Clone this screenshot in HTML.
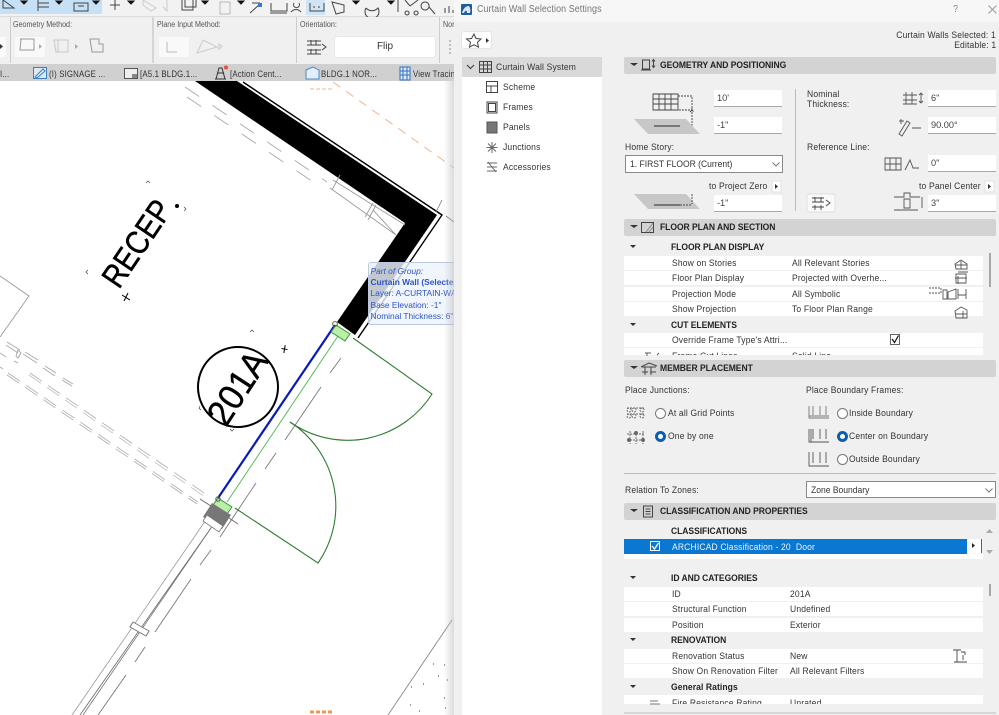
<!DOCTYPE html>
<html><head><meta charset="utf-8"><style>
html,body{margin:0;padding:0;width:999px;height:715px;overflow:hidden;background:#f0f0f0}
body{position:relative;font-family:"Liberation Sans",sans-serif;font-size:9.6px;color:#333}
.a{position:absolute}
.t{position:absolute;white-space:nowrap;line-height:12px;height:12px;letter-spacing:.18px;margin-top:2px;transform:scaleX(.89);transform-origin:0 50%}
.b{font-weight:bold;color:#222;letter-spacing:-.05px;margin-top:1px}
.tr{transform-origin:100% 50%;margin-top:1px}
.u{font-size:8px;color:#555;letter-spacing:0;margin-top:1px}
.tb{font-size:8.8px;color:#333;margin-top:1px}
.h{position:absolute;left:624px;width:372px;height:17px;background:#d3d3d3;border-radius:2px}
.in{position:absolute;background:#fff;border-bottom:1px solid #a8a8a8;box-sizing:border-box;height:17px;width:68px;line-height:16px;padding-left:3px;font-size:9.2px;color:#444}
.r{position:absolute;left:624px;width:359px;height:14px;background:#fff}
.s{position:absolute;left:624px;width:359px;height:15px;background:#f0f0f0}
svg{position:absolute;overflow:visible}
.rad{position:absolute;width:9px;height:9px;border:1px solid #777;border-radius:50%;background:#fff}
.on{width:5px;height:5px;border:3px solid #0a5fb0}
.bt{font-family:"Liberation Sans",sans-serif}
.sp{display:inline-block;transform:scaleX(.89);transform-origin:0 50%;white-space:nowrap}
</style></head><body>

<!-- CAD drawing -->
<div class="a" style="left:0;top:81px;width:454px;height:634px;background:#fff"></div>
<svg style="left:0;top:0" width="454" height="715" viewBox="0 0 454 715">
<g fill="none">
<polygon points="195,81 237,81 437,215 355,335 337,322 405,223" fill="#000"/>
<polyline points="243,82 442,215 358,338" stroke="#000" stroke-width="1.4"/>
<!-- orange dashed -->
<path d="M333,82L454,168" stroke="#eeb58f" stroke-width="1" stroke-dasharray="9 7"/>
<path d="M310,89h22" stroke="#f0b592" stroke-width="1" stroke-dasharray="4 2"/>
<!-- upper grey dashes -->
<path d="M185,87L327,182M187,97L322,188" stroke="#aaa" stroke-width=".9" stroke-dasharray="17 16"/>
<path d="M333,180L405,225M330,188L396,235M340,175L332,190M373,203L365,217M376,205L368,220M373,210L396,235" stroke="#999" stroke-width=".9"/>
<path d="M442,200L436,212M446,216L454,222" stroke="#777" stroke-width=".8"/>
<!-- left box -->
<path d="M0,276L29,296L0,337" stroke="#999" stroke-width=".9"/>
<!-- dash rows -->
<path d="M7,342L20,350M6,345L18,353M23,354L37,363M25,352L38,360M43,368L55,376M45,366L56,373M62,380L72,386M63,378L73,384M0,353L6,357M0,367L3,369" stroke="#aaa" stroke-width=".9"/>
<path d="M30,373L207,495" stroke="#aaa" stroke-width=".8" stroke-dasharray="14.500 7.400"/>
<path d="M29,375L205,497" stroke="#bbb" stroke-width=".8" stroke-dasharray="14.500 7.400"/>
<path d="M8,373L198,502" stroke="#aaa" stroke-width=".8" stroke-dasharray="14.500 7.400"/>
<path d="M7,375L197,504" stroke="#aaa" stroke-width=".8" stroke-dasharray="14.500 7.400"/>
<path d="M18,358l3,-5l-3,-3l-2,6zM14,361l4,2" stroke="#999" stroke-width=".8"/>
<!-- bottom walls -->
<path d="M208,517L72,715" stroke="#999" stroke-width=".8"/>
<path d="M213,525L80,715" stroke="#666" stroke-width=".8"/>
<path d="M211,528L83,715" stroke="#777" stroke-width=".8"/>
<path d="M133,622l16,9l-3,5l-16,-9z" fill="#fff" stroke="#777"/>
<path d="M341,358L330,373M321,387L285,440M276,453L265,469M256,483L220,537M211,550L200,565M191,579L155,632M145,647L135,662M126,675L98,715" stroke="#777" stroke-width=".9"/>
<path d="M200,499L214,508M226,516L238,524" stroke="#666" stroke-width=".9"/>
<!-- Door -->
<path d="M353,338L432,394A100,100 0 0 1 290,422" stroke="#2f7d33" stroke-width="1.1"/>
<path d="M235,508L318,563A100,100 0 0 0 290,422" stroke="#2f7d33" stroke-width="1.1"/>
<path d="M340,333L227,502" stroke="#5cb85c" stroke-width="1"/>
<path d="M335,325L218,498" stroke="#0a1ab8" stroke-width="2.2"/>
<path d="M336,325l14,9l-5,7l-14,-9zM218,498l14,9l-5,7l-14,-9z" fill="#b7f0a6" stroke="#2f8f33" stroke-width=".9"/>
<path d="M212,503l19,12l-9,14l-19,-12z" fill="#777"/>
<path d="M207,515l16,11l-4,6l-16,-11z" fill="#fff" stroke="#777" stroke-width=".8"/>
<circle cx="335" cy="324" r="2.4" stroke="#6b6b2a"/><circle cx="218" cy="499" r="2.2" stroke="#555"/>
<!-- marker -->
<circle cx="238" cy="387" r="40" stroke="#000" stroke-width="2"/>
<path d="M281,349h6M284,353l0,-8" stroke="#000" transform="rotate(10 284 352)"/>
<path d="M122,269l8,5M128,267l-4,8" stroke="#000" transform="translate(0,26)"/>
<path d="M250,332l2,-2l2,2M146,183l2,-2l2,2M88,270l-2,2l2,2M184,207l2,2l-2,2M200,406l-1,2l2,2M230,429l2,2l2,-2" stroke="#444" stroke-width=".7"/>
<circle cx="177" cy="206" r="2" fill="#000"/>
<!-- bottom right -->
<path d="M452,620L388,715" stroke="#888" stroke-width=".9"/>
<path d="M310,712h22" stroke="#f0955c" stroke-width="3" stroke-dasharray="4 2"/>
<path d="M433,664h1M444,665h1M438,676h1M447,680h1M411,687h1M423,684h1M410,705h1M419,711h1M444,698h1M445,708h1" stroke="#777" stroke-width="1.5"/>
</g>
<text class="bt" transform="translate(119,290) rotate(-56)" font-size="33" fill="#000" stroke="#000" stroke-width=".5" textLength="97" lengthAdjust="spacingAndGlyphs">RECEP</text>
<text class="bt" transform="translate(226,428) rotate(-57)" font-size="36" fill="#000" stroke="#000" stroke-width=".4" textLength="80" lengthAdjust="spacingAndGlyphs">201A</text>
</svg>

<!-- tooltip -->
<div class="a" style="left:368px;top:262px;width:86px;height:63px;background:rgba(238,243,252,.82);border:1px solid #b9c9e3;border-right:0;box-sizing:border-box;border-radius:3px 0 0 3px;overflow:hidden;color:#2b55c9;font-size:8.4px;line-height:11.2px;padding:3px 0 0 1.5px;white-space:nowrap">
<i>Part of Group:</i><br><b>Curtain Wall (Selected)</b><br>Layer: A-CURTAIN-WALL<br>Base Elevation: -1"<br>Nominal Thickness: 6"
</div>
<div class="a" style="left:444px;top:81px;width:10px;height:634px;background:linear-gradient(90deg,rgba(200,200,200,0),rgba(190,190,190,.55))"></div>

<!-- Top toolbar -->
<div class="a" style="left:0;top:0;width:454px;height:16px;background:#f2f2f2"></div>
<div class="a" style="left:0;top:0;width:102px;height:14px;background:#c6e0f5"></div>
<div class="a" style="left:306px;top:0;width:19px;height:15px;background:#cfe4f5"></div>
<div class="a" style="left:0;top:16px;width:454px;height:1px;background:#dcdcdc"></div>
<svg style="left:0;top:0" width="454" height="17" viewBox="0 0 454 17" fill="none" stroke="#444" stroke-width="1">
<path d="M3,0L14,8H3zM38,0v11M38,3h11M38,7h11" />
<path d="M21,1l3,3l3,-3zM56,1l3,3l3,-3zM93,1l3,3l3,-3zM128,1l3,3l3,-3zM202,1l3,3l3,-3zM238,1l3,3l3,-3zM353,1l3,3l3,-3zM388,1l3,3l3,-3z" fill="#111" stroke="#111"/>
<path d="M74,3h14v8h-14zM78,6h6"/>
<path d="M110,5h10M115,0v10"/>
<path d="M143,0l13,8l-5,3l-8,-6zM167,0v11l-4,-4" stroke="#ccc"/>
<path d="M182,0v10h11V0M185,0v7h11V0"/>
<path d="M220,2h10v12h-10z" stroke="#bbb"/>
<path d="M250,13l10,-9M252,3h8M270,13h17M271,3v8h16v-8"/>
<path d="M294,3a3,3 0 1 0 5,0M291,12q5,-5 10,0"/>
<path d="M310,3v8h14v-8M313,7h2M318,7h2"/>
<path d="M332,2l12,3v7l-8,2zM366,8a7,7 0 1 0 12,0a8,8 0 0 1 -12,0"/>
<path d="M405,0l5,6M418,0l-8,6M407,11a2,2 0 1 0 .1,0M416,11a2,2 0 1 0 .1,0M425,2a4,4 0 1 0 .1,0M429,7l6,7M398,0v12" stroke-width="1"/>
<path d="M445,8v5M449,6v7M453,10v3"/>
<rect x="258" y="3" width="4" height="4" fill="#3377dd" stroke="none"/>
</svg>

<!-- options -->
<div class="a" style="left:0;top:17px;width:454px;height:47px;background:#f0f0f0"></div>
<div class="a" style="left:10px;top:17px;width:1px;height:46px;background:#ccc"></div>
<div class="a" style="left:152px;top:17px;width:2px;height:46px;background:#d5d5d5"></div>
<div class="a" style="left:296px;top:17px;width:1px;height:46px;background:#ccc"></div>
<div class="a" style="left:439px;top:17px;width:1px;height:46px;background:#ccc"></div>
<div class="a" style="left:0;top:37px;width:6px;height:20px;background:#fafafa"></div>
<div class="a" style="left:15px;top:37px;width:30px;height:20px;background:#f9f9f9"></div>
<div class="a" style="left:159px;top:37px;width:30px;height:20px;background:#f9f9f9"></div>
<div class="t u" style="left:13px;top:18px">Geometry Method:</div>
<div class="t u" style="left:157px;top:18px">Plane Input Method:</div>
<div class="t u" style="left:300px;top:18px">Orientation:</div>
<div class="t u" style="left:443px;top:18px">Nor</div>
<svg style="left:0;top:17px" width="454" height="47" viewBox="0 17 454 47" fill="none" stroke="#aaa" stroke-width="1">
<path d="M20,39h14v11h-14l1,-11zM90,39h9v5h4v8h-11z" stroke="#999"/>
<path d="M39,44l3,2.5l-3,2.5z" fill="#aaa" stroke="none"/><path d="M75,44l3,2.5l-3,2.5z" fill="#aaa" stroke="none"/><path d="M0,44l3,2.5l-3,2.5z" fill="#333" stroke="none"/>
<path d="M54,40h14v12h-12zM58,40v12" stroke="#c8c8c8"/>
<path d="M167,42v10h10" stroke="#bbb"/>
<path d="M197,53l6,-13l14,7zM219,44l3,2.5l-3,2.5z" stroke="#ccc"/>
<path d="M307,41h14M307,45h14M307,50h14M307,54h14M311,40v5M316,40v5M311,49v5M316,49v5M322,44l4,3l-4,3" stroke="#444"/>
<path d="M450,40v15" stroke="#888" stroke-dasharray="2 2"/>
</svg>
<div class="a" style="left:335px;top:37px;width:100px;height:20px;background:#fff;border-radius:2px;box-shadow:0 0 1px #bbb;text-align:center;line-height:20px;font-size:10px;color:#333">Flip</div>

<!-- tabs -->
<div class="a" style="left:0;top:64px;width:454px;height:17px;background:#d0d0d0"></div>
<div class="t tb" style="left:0;top:67px">I...</div>
<div class="t tb" style="left:49px;top:67px">(I) SIGNAGE ...</div>
<div class="t tb" style="left:140px;top:67px">[A5.1 BLDG.1...</div>
<div class="t tb" style="left:230px;top:67px">[Action Cent...</div>
<div class="t tb" style="left:321px;top:67px">BLDG.1 NOR...</div>
<div class="t tb" style="left:413px;top:67px;width:46px;overflow:hidden">View Tracing</div>
<svg style="left:0;top:64px" width="454" height="17" viewBox="0 64 454 17" fill="none">
<rect x="33.500" y="67.500" width="13" height="11" fill="#dceaf7" stroke="#3e7fc0"/><path d="M35,77l8,-8l2,2l-8,7z" stroke="#3e7fc0"/>
<rect x="124.500" y="68.500" width="13" height="10" stroke="#555" fill="#eee"/><rect x="132" y="74" width="5" height="4" fill="#888"/>
<path d="M216,79l3,-11h3l3,11zM215,79h11M217,73h7" stroke="#333"/><circle cx="226" cy="67.500" r="2" fill="#e0533a"/>
<path d="M306,70l7,-3l6,3v9h-13z" fill="#e4eef8" stroke="#4a8ac4"/>
<rect x="400" y="67" width="10" height="13" fill="#dce9f7" stroke="#2f6fc0"/><path d="M400,71h10M400,75h10M403,67v13M407,67v13" stroke="#2f6fc0"/>
</svg>

<!-- DIALOG -->
<div class="a" style="left:454px;top:0;width:545px;height:715px;background:#f0f0f0"></div>
<div class="a" style="left:454px;top:0;width:545px;height:22px;background:#f7f7f7"></div>
<div class="a" style="left:461px;top:4px;width:11px;height:11px;background:#1f5d9c;border-radius:1px"></div>
<svg style="left:461px;top:4px" width="11" height="11" viewBox="0 0 11 11" fill="none"><path d="M1,9Q3,2 8,2Q10,5 9,9H6Q6,6 4,7L3,9z" fill="#dbe9f6"/></svg>
<div class="t" style="left:477px;top:2px;font-size:10px;color:#777;letter-spacing:.1px">Curtain Wall Selection Settings</div>
<div class="t" style="left:953px;top:2px;font-size:10px;color:#888">?</div>
<svg style="left:988px;top:5px" width="9" height="9" fill="none" stroke="#999"><path d="M.5,.5l8,8M8.500,.5l-8,8"/></svg>

<div class="a" style="left:462px;top:32px;width:29px;height:16px;background:#fff;border-radius:2px;box-shadow:0 0 1px #aaa"></div>
<svg style="left:466px;top:33px" width="24" height="14" fill="none" stroke="#444"><path d="M8,1l2,4.500l5,.5l-3.500,3.200l1,5l-4.500,-2.500l-4.500,2.500l1,-5L0.500,6l5,-.5z"/><path d="M20,5l3,2.500l-3,2.500z" fill="#333" stroke="none"/></svg>
<div class="t tr" style="right:3px;top:29px;color:#333">Curtain Walls Selected: 1</div>
<div class="t tr" style="right:3px;top:39px;color:#333">Editable: 1</div>

<!-- nav -->
<div class="a" style="left:462px;top:57px;width:140px;height:658px;background:#fff"></div>
<div class="a" style="left:462px;top:57px;width:140px;height:20px;background:#d9d9d9"></div>
<div class="t" style="left:496px;top:60px;color:#333">Curtain Wall System</div>
<div class="t" style="left:503px;top:80px">Scheme</div>
<div class="t" style="left:503px;top:100px">Frames</div>
<div class="t" style="left:503px;top:120px">Panels</div>
<div class="t" style="left:503px;top:140px">Junctions</div>
<div class="t" style="left:503px;top:160px">Accessories</div>
<svg style="left:462px;top:57px" width="40" height="125" viewBox="462 57 40 125" fill="none" stroke="#444">
<path d="M467,65l3.500,3.500l3.500,-3.500" stroke-width="1.2"/>
<path d="M479.500,61.500h12v11h-12zM483.500,61.500v11M487.500,61.500v11M479.500,65h12M479.500,69h12"/>
<path d="M486.500,81.500h11v11h-11zM486.500,86h11M491,86v6.500"/>
<path d="M487,102h10v11h-10z M488.500,103.500h7v8h-7z"/>
<rect x="487" y="122" width="10" height="11" fill="#777" stroke="#555"/>
<path d="M492,142v11M486.500,147.500h11M488,143.500l8,8M496,143.500l-8,8" stroke="#666"/>
<path d="M487,163h10M487,167h10M487,171h10M488,162l8,10" stroke="#666"/>
</svg>

<!-- Geometry -->
<div class="h" style="top:57px"></div>
<svg style="left:624px;top:57px" width="36" height="17" fill="none" stroke="#444"><path d="M6,6l4,3l4,-3z" fill="#333" stroke="none"/><path d="M18.500,3h7v9h-7zM17,13h10M29.500,3v7M28,4.500l1.500,-2l1.500,2M28,8.500l1.500,2l1.500,-2"/></svg>
<div class="t b" style="left:660px;top:59px">GEOMETRY AND POSITIONING</div>

<div class="in" style="left:714px;top:90px">10'</div>
<div class="in" style="left:714px;top:117px">-1"</div>
<div class="in" style="left:714px;top:195px">-1"</div>
<div class="in" style="left:928px;top:90px">6"</div>
<div class="in" style="left:928px;top:117px">90.00°</div>
<div class="in" style="left:928px;top:155px">0"</div>
<div class="in" style="left:928px;top:195px">3"</div>
<div class="a" style="left:625px;top:155px;width:158px;height:18px;background:#fff;border:1px solid #888;box-sizing:border-box;line-height:18px;padding-left:4px;color:#333"><span class="sp">1. FIRST FLOOR (Current)</span></div>
<svg style="left:772px;top:162px" width="8" height="5" fill="none" stroke="#777"><path d="M.5,.5L4,4L7.500,.5"/></svg>
<div class="t" style="left:625px;top:140px">Home Story:</div>
<div class="t" style="left:709px;top:179px">to Project Zero</div>
<div class="t" style="left:807px;top:87px">Nominal</div>
<div class="t" style="left:807px;top:97px">Thickness:</div>
<div class="t" style="left:807px;top:140px">Reference Line:</div>
<div class="t" style="left:919px;top:179px">to Panel Center</div>
<div class="a" style="left:795px;top:89px;width:1px;height:122px;background:#bbb"></div>
<svg style="left:624px;top:85px" width="375" height="130" viewBox="624 85 375 130" fill="none" stroke="#444" stroke-width=".9">
<path d="M653,94h25v16h-25zM659,94v16M665,94v16M671,94v16M653,99h25M653,104h25"/>
<path d="M678,96h14v35M679,110h13M692,110v-3M690,112l2,-2l2,2M690,129l2,2l2,-2" stroke-dasharray="2 1"/>
<path d="M634,119h52l14,15h-52z" fill="#c7c7c7" stroke="none"/><rect x="654" y="125" width="26" height="2" fill="#777" stroke="none"/>
<path d="M634,194h52l14,15h-52z" fill="#c7c7c7" stroke="none"/><rect x="654" y="204" width="26" height="2" fill="#777" stroke="none"/>
<path d="M692,194v10M680,205h12" stroke-dasharray="2 1"/>
<path d="M903,95h14M903,100h14M903,104h14M906,92v12M912,92v12M921,93v10M919,95l2,-2l2,2M919,101l2,2l2,-2" stroke="#555"/>
<path d="M899,134l8,-13l3,2l-8,13zM912,128h9M899,121h5M901,119v5" stroke="#555"/>
<path d="M885,158h16v12h-16zM890,158v12M896,158v12M885,164h16M905,170l5,-10l3,8h6" stroke="#555"/>
<path d="M894,197h10v-4h6v4h10M904,199h6v9h-6zM922,197v11M894,210h24" stroke="#555"/>
<rect x="807" y="194" width="28" height="18" fill="#fafafa" stroke="#ddd" rx="2"/>
<path d="M812,198h12M812,202h12M812,207h12M815,197v5M821,197v5M815,205v5M821,205v5M826,200l4,3l-4,3" stroke="#444"/>
<rect x="772" y="181" width="9" height="11" fill="#fff" stroke="#ddd"/><rect x="985" y="181" width="9" height="11" fill="#fff" stroke="#ddd"/>
<path d="M775,184l3,2.500l-3,2.500zM988,184l3,2.500l-3,2.500z" fill="#333" stroke="none"/>
</svg>

<!-- Floor plan -->
<div class="h" style="top:219px"></div>
<svg style="left:624px;top:219px" width="36" height="17" fill="none" stroke="#444"><path d="M6,6l4,3l4,-3z" fill="#333" stroke="none"/><rect x="17.500" y="3.500" width="12" height="10"/><path d="M22,13l7,-9M25,13l4,-5" stroke="#888"/></svg>
<div class="t b" style="left:660px;top:221px">FLOOR PLAN AND SECTION</div>
<div class="s" style="top:240px"></div><div class="r" style="top:256px"></div><div class="r" style="top:271px"></div><div class="r" style="top:287px"></div><div class="r" style="top:302px"></div>
<div class="s" style="top:317px"></div><div class="r" style="top:333px"></div><div class="r" style="top:348px;height:7px"></div>
<div class="t b" style="left:671px;top:241px">FLOOR PLAN DISPLAY</div>
<div class="t b" style="left:671px;top:319px">CUT ELEMENTS</div>
<div class="t" style="left:672px;top:256px">Show on Stories</div><div class="t" style="left:792px;top:256px">All Relevant Stories</div>
<div class="t" style="left:672px;top:271px">Floor Plan Display</div><div class="t" style="left:792px;top:271px">Projected with Overhe...</div>
<div class="t" style="left:672px;top:287px">Projection Mode</div><div class="t" style="left:792px;top:287px">All Symbolic</div>
<div class="t" style="left:672px;top:302px">Show Projection</div><div class="t" style="left:792px;top:302px">To Floor Plan Range</div>
<div class="t" style="left:672px;top:333px">Override Frame Type's Attri...</div>
<div class="a" style="left:624px;top:349px;width:360px;height:6px;overflow:hidden"><div class="t" style="left:48px;top:0">Frame Cut Lines</div><div class="t" style="left:168px;top:0">Solid Line</div></div>
<svg style="left:624px;top:239px" width="375" height="118" viewBox="624 239 375 118" fill="none" stroke="#555" stroke-width=".9">
<path d="M630,245l3,3l3,-3zM630,323l3,3l3,-3z" fill="#333" stroke="none"/>
<path d="M955,264l6,-4l6,4v5h-11zM955,265h12M961,261v8"/>
<path d="M956,274h10v9h-10zM958,272h10M955,278h12M958,276v8"/>
<path d="M929,288h12v5h-12" stroke-dasharray="2 1"/><path d="M943,290h4v9h-4zM948,292l8,-3v10h-8zM958,289v10M958,295h8M966,289v10"/>
<path d="M955,311l6,-4l6,3v8h-11zM955,314h12M963,311v7"/>
<rect x="890.500" y="334.500" width="9" height="10" fill="#fff" stroke="#555"/><path d="M892,339l2.500,3.500l4,-7" stroke="#111" stroke-width="1.2"/>
<path d="M645,353h6M647,353v3M657,355l2,-2"/>
<path d="M990,253v34" stroke="#888" stroke-width="1.4"/>
</svg>

<!-- Member placement -->
<div class="h" style="top:360px"></div>
<svg style="left:624px;top:360px" width="36" height="17" fill="none" stroke="#444"><path d="M6,6l4,3l4,-3z" fill="#333" stroke="none"/><path d="M17,7l8,-4l8,3M18,7h14M21,7v8M27,7v8M18,12h6M26,12h6"/></svg>
<div class="t b" style="left:660px;top:362px">MEMBER PLACEMENT</div>
<div class="t" style="left:625px;top:383px">Place Junctions:</div>
<div class="t" style="left:806px;top:383px">Place Boundary Frames:</div>
<div class="rad" style="left:655px;top:408px"></div><div class="t" style="left:668px;top:406px">At all Grid Points</div>
<div class="rad on" style="left:655px;top:431px"></div><div class="t" style="left:668px;top:429px">One by one</div>
<div class="rad" style="left:837px;top:408px"></div><div class="t" style="left:849px;top:406px">Inside Boundary</div>
<div class="rad on" style="left:837px;top:431px"></div><div class="t" style="left:849px;top:429px">Center on Boundary</div>
<div class="rad" style="left:837px;top:454px"></div><div class="t" style="left:849px;top:452px">Outside Boundary</div>
<svg style="left:624px;top:400px" width="220" height="70" viewBox="624 400 220 70" fill="none" stroke="#666" stroke-width=".9">
<path d="M627,408h18M627,414h18M629,408a2,2 0 1 0 .1,0M634,408a2,2 0 1 0 .1,0M642,408a2,2 0 1 0 .1,0M629,414a2,2 0 1 0 .1,0M634,414a2,2 0 1 0 .1,0M642,414a2,2 0 1 0 .1,0" stroke-dasharray="2 1"/>
<path d="M627,434h18M627,440h18M630,431v13M636,431v13M643,431v13" stroke-dasharray="2 1"/>
<circle cx="636" cy="433" r="1.500" fill="#666"/><circle cx="629" cy="440" r="1.500" fill="#666"/><circle cx="643" cy="440" r="1.500" fill="#666"/>
<path d="M809,406v12h20M813,406v9M820,406v9M826,406v9M809,416h20" stroke="#777"/>
<path d="M809,429v13h20M813,429v10M820,429v10M826,429v10M811,429v13" stroke="#555"/>
<path d="M809,452v14h20M813,452v11M820,452v11M826,452v11" stroke="#555"/>
</svg>
<div class="a" style="left:624px;top:473px;width:372px;height:1px;background:#bbb"></div>
<div class="t" style="left:625px;top:483px">Relation To Zones:</div>
<div class="a" style="left:806px;top:481px;width:190px;height:17px;background:#fff;border:1px solid #888;box-sizing:border-box;line-height:17px;padding-left:4px"><span class="sp">Zone Boundary</span></div>
<svg style="left:985px;top:488px" width="8" height="5" fill="none" stroke="#777"><path d="M.5,.5L4,4L7.500,.5"/></svg>

<!-- Classification -->
<div class="h" style="top:503px"></div>
<svg style="left:624px;top:503px" width="36" height="17" fill="none" stroke="#444"><path d="M6,6l4,3l4,-3z" fill="#333" stroke="none"/><path d="M19.500,3h9v11h-9zM21.500,6h5M21.500,8.500h5M21.500,11h5"/></svg>
<div class="t b" style="left:660px;top:505px">CLASSIFICATION AND PROPERTIES</div>
<div class="t b" style="left:671px;top:525px">CLASSIFICATIONS</div>
<div class="a" style="left:624px;top:539px;width:343px;height:15px;background:#0a78d2"></div>
<div class="a" style="left:967px;top:539px;width:16px;height:20px;background:#f5f5f5"></div>
<div class="a" style="left:624px;top:554px;width:359px;height:5px;background:#fff"></div>
<div class="a" style="left:968px;top:539px;width:13px;height:14px;background:#fff;border-right:1px solid #0a78d2"></div>
<div class="t" style="left:672px;top:541px;margin-top:1px;color:#eaf3fb">ARCHICAD Classification - 20&nbsp; Door</div>
<svg style="left:624px;top:525px" width="375" height="35" viewBox="624 525 375 35" fill="none">
<rect x="650.500" y="541.500" width="9" height="9" stroke="#fff" fill="#0a78d2"/><path d="M652,546l2.500,3l4,-6" stroke="#fff" stroke-width="1.3"/>
<path d="M972,543l3,2.500l-3,2.500z" fill="#222"/>
<path d="M986,533l3.500,-4l3.500,4zM986,550l3.500,4l3.500,-4z" fill="#aaa"/>
</svg>

<div class="s" style="top:571px"></div><div class="r" style="top:587px"></div><div class="r" style="top:602px"></div><div class="r" style="top:618px"></div>
<div class="s" style="top:633px"></div><div class="r" style="top:649px"></div><div class="r" style="top:664px"></div>
<div class="s" style="top:679px"></div><div class="r" style="top:695px;height:9px"></div>
<div class="t b" style="left:671px;top:572px">ID AND CATEGORIES</div>
<div class="t b" style="left:671px;top:634px">RENOVATION</div>
<div class="t b" style="left:671px;top:681px;letter-spacing:.1px">General Ratings</div>
<div class="t" style="left:672px;top:587px">ID</div><div class="t" style="left:790px;top:587px">201A</div>
<div class="t" style="left:672px;top:602px">Structural Function</div><div class="t" style="left:790px;top:602px">Undefined</div>
<div class="t" style="left:672px;top:618px">Position</div><div class="t" style="left:790px;top:618px">Exterior</div>
<div class="t" style="left:672px;top:649px">Renovation Status</div><div class="t" style="left:790px;top:649px">New</div>
<div class="t" style="left:672px;top:664px">Show On Renovation Filter</div><div class="t" style="left:790px;top:664px">All Relevant Filters</div>
<div class="a" style="left:624px;top:696px;width:360px;height:8px;overflow:hidden"><div class="t" style="left:48px;top:0">Fire Resistance Rating</div><div class="t" style="left:166px;top:0">Unrated</div></div>
<svg style="left:624px;top:570px" width="375" height="145" viewBox="624 570 375 145" fill="none" stroke="#555" stroke-width=".9">
<path d="M630,576l3,3l3,-3zM630,638l3,3l3,-3zM630,685l3,3l3,-3z" fill="#333" stroke="none"/>
<path d="M990,584v12" stroke="#888" stroke-width="1.4"/>
<path d="M953,650h8M957,650v12M954,662h6M961,652h4v3M963,655v5M959,662h8" stroke="#444"/>
<path d="M650,701h8M650,704h10" stroke="#777"/>
<path d="M624,713h372" stroke="#bbb"/>
</svg>

</body></html>
